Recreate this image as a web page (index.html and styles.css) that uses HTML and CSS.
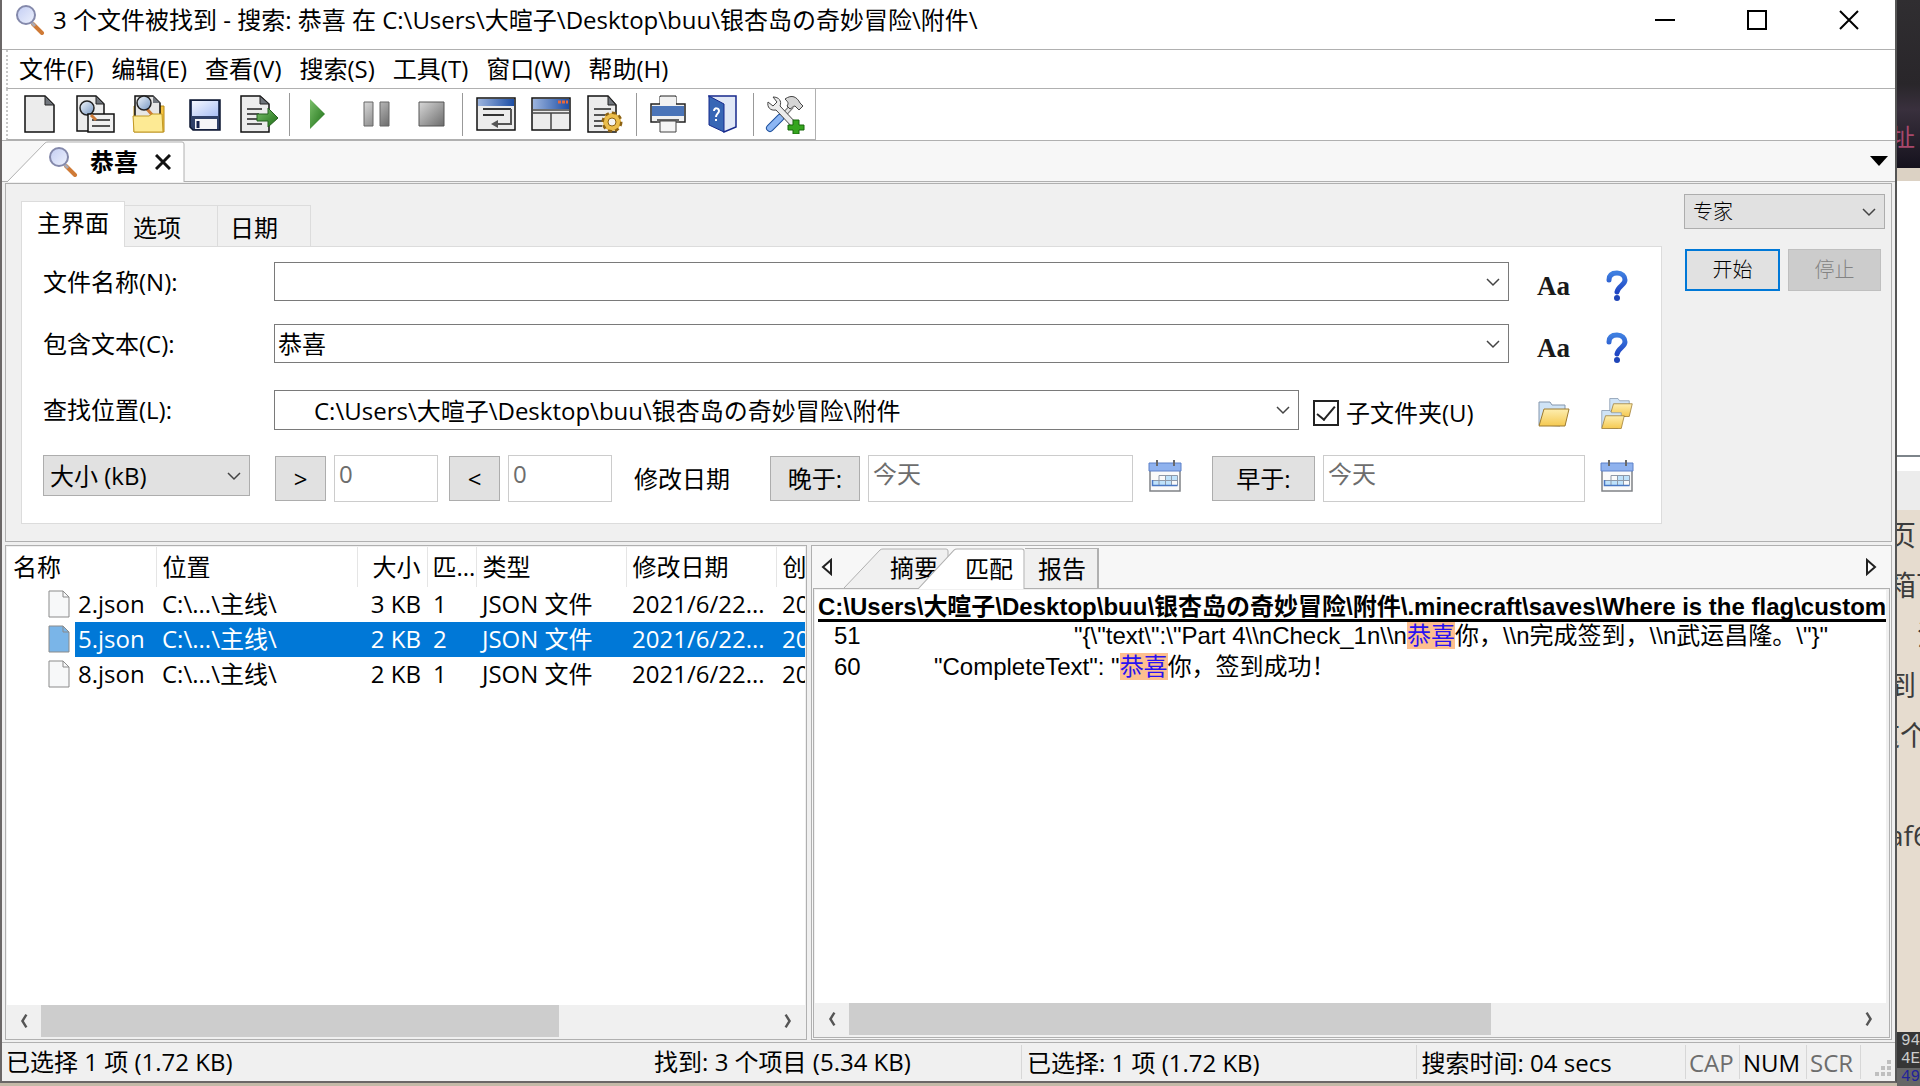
FILE: index.html
```html
<!DOCTYPE html>
<html lang="zh-CN">
<head>
    <meta charset="UTF-8">
    <meta name="viewport" content="width=device-width, initial-scale=1.0">
    <title>搜索: 恭喜</title>
    <link rel="stylesheet" href="styles.css">
</head>
<body>

    <!-- Shared gradients and symbols -->
    <svg class="defs" width="0" height="0" aria-hidden="true">
        <defs>
            <linearGradient id="lens" x1="0" y1="0" x2="1" y2="1"><stop offset="0" stop-color="#c3cdf3"/><stop offset="1" stop-color="#eef2fd"/></linearGradient>
            <linearGradient id="lensBlue" x1="0" y1="0" x2="1" y2="1"><stop offset="0" stop-color="#f4f8fd"/><stop offset="1" stop-color="#7596c2"/></linearGradient>
            <linearGradient id="blueBar" x1="0" y1="0" x2="1" y2="0"><stop offset="0" stop-color="#9cb4de"/><stop offset="1" stop-color="#1d4ea5"/></linearGradient>
            <linearGradient id="disk" x1="0" y1="0" x2="1" y2="1"><stop offset="0" stop-color="#f4f7ff"/><stop offset="1" stop-color="#a9bff5"/></linearGradient>
            <linearGradient id="green" x1="0" y1="0" x2="1" y2="1"><stop offset="0" stop-color="#7bc06b"/><stop offset="1" stop-color="#1b6e14"/></linearGradient>
            <linearGradient id="grey" x1="0" y1="0" x2="1" y2="1"><stop offset="0" stop-color="#d8d8d8"/><stop offset="1" stop-color="#6c6c6c"/></linearGradient>
            <linearGradient id="folder" x1="0" y1="0" x2="0" y2="1"><stop offset="0" stop-color="#fdeeb0"/><stop offset="1" stop-color="#f5c951"/></linearGradient>
            <linearGradient id="quest" x1="0" y1="0" x2="0" y2="1"><stop offset="0" stop-color="#3f7fe0"/><stop offset="1" stop-color="#1f45c4"/></linearGradient>
        </defs>
        <symbol id="magnifier" viewBox="0 0 30 30">
            <path d="M18 19l9 9" stroke="#cf7a36" stroke-width="4" stroke-linecap="round"/>
            <path d="M16 17l4 4" stroke="#a9a9b4" stroke-width="3"/>
            <circle cx="11" cy="10" r="9" fill="url(#lens)" stroke="#8489ab" stroke-width="2"/>
        </symbol>
        <symbol id="page" viewBox="0 0 40 40">
            <path d="M5 2h20l9 9v27H5z" fill="#ececec" stroke="#111" stroke-width="1.5"/>
            <path d="M25 2v9h9z" fill="#70757c" stroke="#222"/>
        </symbol>
        <symbol id="chevron" viewBox="0 0 16 10">
            <path d="M2 2l6 6 6-6" fill="none" stroke="#444" stroke-width="1.5"/>
        </symbol>
        <symbol id="scrollLeft" viewBox="0 0 10 18">
            <path d="M8 1L3 9l5 8" fill="none" stroke="#555" stroke-width="3"/>
        </symbol>
        <symbol id="scrollRight" viewBox="0 0 10 18">
            <path d="M2 1l5 8-5 8" fill="none" stroke="#555" stroke-width="3"/>
        </symbol>
        <symbol id="question" viewBox="0 0 22 32">
            <path d="M3 10C3 5 6 3 11 3s8 3 8 7c0 5-7 6-8 12" fill="none" stroke="url(#quest)" stroke-width="5" stroke-linecap="round"/>
            <circle cx="11" cy="28" r="3" fill="#1f45b8"/>
        </symbol>
        <symbol id="calendar" viewBox="0 0 34 34">
            <path d="M2 6h30v26H2z" fill="#fafafa" stroke="#808387" stroke-width="1.5"/>
            <path d="M1 4h32v8H1z" fill="#8fb2ee" stroke="#5c80c8"/>
            <path d="M9 1v6M26 1v6" stroke="#6a6a6a" stroke-width="2"/>
            <path d="M5 21h19v5H5zM17 17h12v5H17z" fill="#bfe2fb"/>
            <path d="M11 16.500h18.500v10M11 16.500v10M4.500 21.500h25M17.500 16.500v10M23.500 16.500v10" fill="none" stroke="#8e99a8"/>
            <path d="M4.500 21v5.500h25" fill="none" stroke="#4a78c4" stroke-width="1.5"/>
        </symbol>
        <symbol id="openFolder" viewBox="0 0 34 28">
            <path d="M2 25V2h11l2 3h13v8L23 26z" fill="#cfe3f6" stroke="#8496ac"/>
            <path d="M7 9h25l-4 17H2z" fill="url(#folder)" stroke="#9c7a30"/>
        </symbol>
        <symbol id="file" viewBox="0 0 22 28">
            <path d="M1 1h14l6 6v20H1z" fill="currentColor" stroke="#8b8b8b"/>
            <path d="M15 1v6h6" fill="none" stroke="#8b8b8b"/>
        </symbol>
    </svg>

    <div class="screen">
        <main class="window">

            <!-- Title bar -->
            <header class="title-bar">
                <svg class="app-icon"><use href="#magnifier"/></svg>
                <h1>3 个文件被找到 - 搜索: 恭喜 在 C:\Users\大暄子\Desktop\buu\银杏岛の奇妙冒险\附件\</h1>
                <div class="window-buttons">
                    <button aria-label="最小化"><svg width="20" height="20"><path d="M0 10h20" stroke="#000" stroke-width="2"/></svg></button>
                    <button aria-label="最大化"><svg width="20" height="20"><path d="M1 1h18v18H1z" fill="none" stroke="#000" stroke-width="2"/></svg></button>
                    <button aria-label="关闭"><svg width="20" height="20"><path d="M1 1l18 18M19 1L1 19" stroke="#000" stroke-width="2"/></svg></button>
                </div>
            </header>

            <!-- Menu -->
            <nav class="menu">
                <button>文件(F)</button>
                <button>编辑(E)</button>
                <button>查看(V)</button>
                <button>搜索(S)</button>
                <button>工具(T)</button>
                <button>窗口(W)</button>
                <button>帮助(H)</button>
            </nav>

            <!-- Toolbar -->
            <div class="toolbar-row">
                <div class="toolbar">
                    <button aria-label="新建"><svg viewBox="0 0 40 40"><use href="#page"/></svg></button>
                    <button aria-label="打开搜索">
                        <svg viewBox="0 0 40 40">
                            <path d="M2 2h19l8 8v27H2z" fill="#ececec" stroke="#111" stroke-width="1.5"/>
                            <path d="M21 2v8h8z" fill="#70757c" stroke="#222"/>
                            <path d="M16 19l7 8" stroke="#cf7a36" stroke-width="3"/>
                            <circle cx="12" cy="14" r="7" fill="url(#lensBlue)" stroke="#222" stroke-width="1.5"/>
                            <path d="M13 20h26v18H13z" fill="#f1f1f1" stroke="#111" stroke-width="1.5"/>
                            <path d="M17 26h18M17 32h18" stroke="#222" stroke-width="1.5"/>
                            <path d="M16 21l5 5" stroke="#cf7a36" stroke-width="3"/>
                        </svg>
                    </button>
                    <button aria-label="打开文件夹">
                        <svg viewBox="0 0 40 40">
                            <path d="M4 12h30v26H4z" fill="#f6c33f" stroke="#b58a1c"/>
                            <path d="M5 2h18l7 7v15H5z" fill="#e6e6e6" stroke="#111" stroke-width="1.5"/>
                            <path d="M23 2v7h7z" fill="#70757c"/>
                            <path d="M17 15l7 8" stroke="#cf7a36" stroke-width="3"/>
                            <circle cx="14" cy="9" r="7" fill="url(#lensBlue)" stroke="#222" stroke-width="1.5"/>
                            <path d="M3 22h16l3-2h10l1 18H4z" fill="#fdea94" stroke="#c29924"/>
                        </svg>
                    </button>
                    <button aria-label="保存">
                        <svg viewBox="0 0 40 40">
                            <path d="M5 6h30v30H8l-3-3z" fill="#2f4068" stroke="#0c1630" stroke-width="1.5"/>
                            <path d="M7 7h26v15H7z" fill="url(#disk)"/>
                            <path d="M10 25h22v10H10z" fill="#f5f5f7"/>
                            <path d="M13 27v7" stroke="#16234d" stroke-width="3"/>
                        </svg>
                    </button>
                    <button aria-label="导出">
                        <svg viewBox="0 0 40 40">
                            <path d="M1 2h19l9 8v28H1z" fill="#ececec" stroke="#111" stroke-width="1.5"/>
                            <path d="M20 2v8h9z" fill="#70757c" stroke="#222"/>
                            <path d="M7 15h15M7 20h12M7 25h10M7 30h15" stroke="#222" stroke-width="1.5"/>
                            <path d="M17 20h11v-6l10 10-10 9v-6H17z" fill="url(#green)" stroke="#255e20"/>
                        </svg>
                    </button>
                    <span class="separator first"></span>
                    <button aria-label="开始"><svg viewBox="0 0 40 40"><path d="M12 5v30l15-15z" fill="url(#green)"/></svg></button>
                    <button aria-label="暂停"><svg viewBox="0 0 40 40"><path d="M11 8h9v24h-9zM27 8h9v24h-9z" fill="url(#grey)" stroke="#666"/></svg></button>
                    <button aria-label="停止"><svg viewBox="0 0 40 40"><path d="M11 8h25v24H11z" fill="url(#grey)" stroke="#555"/></svg></button>
                    <span class="separator wide"></span>
                    <button aria-label="自动换行">
                        <svg viewBox="0 0 40 40">
                            <path d="M1 4h38v32H1z" fill="#ececec" stroke="#111" stroke-width="1.5"/>
                            <path d="M2 5h36v7H2z" fill="url(#blueBar)"/>
                            <path d="M7 15h28M7 21h21" stroke="#333" stroke-width="2"/>
                            <path d="M35 15v15H18" fill="none" stroke="#555" stroke-width="2"/><path d="M22 26l-7 4 7 4z" fill="#555"/>
                        </svg>
                    </button>
                    <button aria-label="布局">
                        <svg viewBox="0 0 40 40">
                            <path d="M1 4h38v32H1z" fill="#ececec" stroke="#111" stroke-width="1.5"/>
                            <path d="M2 5h36v10H2z" fill="url(#blueBar)"/>
                            <path d="M27 8h10" stroke="#e8683c" stroke-width="3" stroke-dasharray="3 1"/>
                            <path d="M2 16h36M2 19h36M20 19v16" stroke="#444" stroke-width="1.5"/>
                        </svg>
                    </button>
                    <button aria-label="选项">
                        <svg viewBox="0 0 40 40">
                            <path d="M2 2h20l8 9v27H2z" fill="#ececec" stroke="#111" stroke-width="1.5"/>
                            <path d="M22 2v9h8z" fill="#70757c" stroke="#222"/>
                            <path d="M8 15h17M8 21h11M8 27h8M8 32h8" stroke="#222" stroke-width="1.5"/>
                            <circle cx="26" cy="28" r="9" fill="#e2b03c" stroke="#8d6212" stroke-width="3" stroke-dasharray="4 3"/>
                            <circle cx="26" cy="28" r="8" fill="#ebbd4b"/>
                            <circle cx="26" cy="28" r="4" fill="#f4f4f4" stroke="#8d6212"/>
                        </svg>
                    </button>
                    <span class="separator"></span>
                    <button aria-label="打印">
                        <svg viewBox="0 0 40 40">
                            <path d="M12 2h16v11H12z" fill="#f1f1f1" stroke="#222"/>
                            <path d="M3 10h34v18H3z" fill="#f1f1f1" stroke="#222" stroke-width="1.5"/>
                            <path d="M12 3h16v8H12z" fill="#f1f1f1"/>
                            <path d="M4 12h32v10H4z" fill="#4a74b8"/>
                            <path d="M9 25h22v4H9z" fill="#666"/>
                            <path d="M12 27h16v11H12z" fill="#f5f5f5" stroke="#444"/>
                        </svg>
                    </button>
                    <button aria-label="帮助">
                        <svg viewBox="0 0 40 40">
                            <path d="M6 2h27v31l-12 5z" fill="#e1e8f6" stroke="#17298c" stroke-width="1.5"/>
                            <path d="M6 2l15 8v28L6 31z" fill="#3766b5" stroke="#17298c"/>
                            <path d="M11 17c0-4 5-3 5 0 0 2-3 3-3 6M13 25v2" fill="none" stroke="#fff" stroke-width="2"/>
                        </svg>
                    </button>
                    <span class="separator"></span>
                    <button aria-label="自定义">
                        <svg viewBox="0 0 40 40">
                            <path d="M27 12L16 24" stroke="#777" stroke-width="5"/><path d="M27 12L16 24" stroke="#e4e4e4" stroke-width="3"/>
                            <path d="M15 24L5 34" stroke="#1d4f9c" stroke-width="8" stroke-linecap="round"/>
                            <path d="M15 24L5 34" stroke="#8cb6f4" stroke-width="6" stroke-linecap="round"/>
                            <path d="M20 5c7-5 12-2 15 4l3 3-4 4-4-4c-2 0-3 2-5 3l-3-3c2-3 1-4-2-7z" fill="#d5d5d5" stroke="#444"/>
                            <path d="M8 3c6 0 9 4 7 9l18 19-4 4-18-19C5 17 2 13 3 8l5 4 4-4z" fill="#ececec" stroke="#444"/>
                            <path d="M28 26h6v5h5v5h-5v4h-6v-4h-5v-5h5z" fill="#35a51e" stroke="#17660b"/>
                        </svg>
                    </button>
                </div>
            </div>

            <!-- Search tabs -->
            <div class="search-tabs">
                <button class="search-tab">
                    <svg class="tab-shape" viewBox="0 0 178 41" preserveAspectRatio="none"><path d="M0 41L38 2q1-1 3-1h134q2 0 2 2v38" fill="#fff" stroke="#b0b0b0"/></svg>
                    <svg class="app-icon"><use href="#magnifier"/></svg>
                    <span>恭喜</span>
                    <svg class="close" width="16" height="16"><path d="M1 1l14 14M15 1L1 15" stroke="#111" stroke-width="3"/></svg>
                </button>
                <button class="tab-list" aria-label="标签列表"><svg width="18" height="10"><path d="M0 0h18L9 10z"/></svg></button>
            </div>

            <!-- Search criteria -->
            <section class="criteria">
                <div class="criteria-main">
                    <div class="page-tabs">
                        <button class="active">主界面</button>
                        <button>选项</button>
                        <button>日期</button>
                    </div>
                    <form class="fields">
                        <div class="row">
                            <label class="name" for="fileName">文件名称(N):</label>
                            <div class="combo"><input type="text" id="fileName"><svg><use href="#chevron"/></svg></div>
                            <button type="button" class="icon-button match-case">Aa</button>
                            <button type="button" class="icon-button" aria-label="帮助"><svg width="22" height="32"><use href="#question"/></svg></button>
                        </div>
                        <div class="row">
                            <label class="name" for="contains">包含文本(C):</label>
                            <div class="combo"><input type="text" id="contains" value="恭喜"><svg><use href="#chevron"/></svg></div>
                            <button type="button" class="icon-button match-case">Aa</button>
                            <button type="button" class="icon-button" aria-label="帮助"><svg width="22" height="32"><use href="#question"/></svg></button>
                        </div>
                        <div class="row look-in">
                            <label class="name" for="lookIn">查找位置(L):</label>
                            <div class="combo"><input type="text" id="lookIn" value="C:\Users\大暄子\Desktop\buu\银杏岛の奇妙冒险\附件"><svg><use href="#chevron"/></svg></div>
                            <label class="subfolders"><input type="checkbox" checked>子文件夹(U)</label>
                            <button type="button" class="icon-button" aria-label="浏览"><svg width="34" height="28"><use href="#openFolder"/></svg></button>
                            <button type="button" class="icon-button" aria-label="浏览多个">
                                <svg width="34" height="34" viewBox="0 0 34 34"><use href="#openFolder" x="8" y="0" width="26" height="21"/><use href="#openFolder" x="0" y="12" width="26" height="21"/></svg>
                            </button>
                        </div>
                        <div class="row filters">
                            <div class="select size-unit">
                                <select aria-label="大小"><option>大小 (kB)</option></select>
                                <svg><use href="#chevron"/></svg>
                            </div>
                            <div class="pair">
                                <button type="button">&gt;</button>
                                <input type="text" class="number" placeholder="0" aria-label="大于">
                            </div>
                            <div class="pair">
                                <button type="button">&lt;</button>
                                <input type="text" class="number" placeholder="0" aria-label="小于">
                            </div>
                            <span class="modified">修改日期</span>
                            <div class="pair date">
                                <button type="button">晚于:</button>
                                <input type="text" placeholder="今天" aria-label="晚于">
                                <button type="button" class="icon-button" aria-label="日历"><svg width="34" height="34"><use href="#calendar"/></svg></button>
                            </div>
                            <div class="pair date">
                                <button type="button" class="before">早于:</button>
                                <input type="text" placeholder="今天" aria-label="早于">
                                <button type="button" class="icon-button" aria-label="日历"><svg width="34" height="34"><use href="#calendar"/></svg></button>
                            </div>
                        </div>
                    </form>
                </div>
                <div class="actions">
                    <div class="select">
                        <select aria-label="模式"><option>专家</option></select>
                        <svg><use href="#chevron"/></svg>
                    </div>
                    <div class="action-buttons">
                        <button class="start">开始</button>
                        <button disabled>停止</button>
                    </div>
                </div>
            </section>

            <!-- Results -->
            <section class="results">
                <div class="file-pane">
                    <div class="file-list">
                        <table>
                            <colgroup>
                                <col class="c-icon"><col class="c-name"><col class="c-path"><col class="c-size">
                                <col class="c-hits"><col class="c-type"><col class="c-date"><col>
                            </colgroup>
                            <thead>
                                <tr><th colspan="2">名称</th><th>位置</th><th class="num">大小</th><th class="hit-count">匹...</th><th>类型</th><th>修改日期</th><th>创</th></tr>
                            </thead>
                            <tbody>
                                <tr><td><svg class="file-icon"><use href="#file"/></svg></td><td>2.json</td><td>C:\...\主线\</td><td class="num">3 KB</td><td>1</td><td>JSON 文件</td><td>2021/6/22...</td><td>20</td></tr>
                                <tr class="selected"><td><svg class="file-icon"><use href="#file"/></svg></td><td>5.json</td><td>C:\...\主线\</td><td class="num">2 KB</td><td>2</td><td>JSON 文件</td><td>2021/6/22...</td><td>20</td></tr>
                                <tr><td><svg class="file-icon"><use href="#file"/></svg></td><td>8.json</td><td>C:\...\主线\</td><td class="num">2 KB</td><td>1</td><td>JSON 文件</td><td>2021/6/22...</td><td>20</td></tr>
                            </tbody>
                        </table>
                    </div>
                    <div class="scrollbar">
                        <svg class="arrow"><use href="#scrollLeft"/></svg>
                        <div class="track"><div class="thumb" style="width: 71%"></div></div>
                        <svg class="arrow"><use href="#scrollRight"/></svg>
                    </div>
                </div>

                <div class="view-pane">
                    <div class="view-tabs">
                        <svg class="scroll-tab" width="12" height="18"><path d="M10 2v14L2 9z" fill="#fff" stroke="#222" stroke-width="2"/></svg>
                        <button class="view-tab slanted">
                            <svg class="tab-shape" viewBox="0 0 105 40" preserveAspectRatio="none"><path d="M0 40L36 2q1-1 3-1h63q2 0 2 2v37" fill="#f0f0f0" stroke="#b0b0b0"/></svg>
                            <span>摘要</span>
                        </button>
                        <button class="view-tab slanted active">
                            <svg class="tab-shape" viewBox="0 0 107 40" preserveAspectRatio="none"><path d="M0 40L36 2q1-1 3-1h65q2 0 2 2v37" fill="#fff" stroke="#b0b0b0"/></svg>
                            <span>匹配</span>
                        </button>
                        <button class="view-tab plain"><span>报告</span></button>
                        <svg class="scroll-tab end" width="12" height="18"><path d="M2 2v14l8-7z" fill="#fff" stroke="#222" stroke-width="2"/></svg>
                    </div>
                    <div class="view-body">
                        <div class="hits">
                            <h2>C:\Users\大暄子\Desktop\buu\银杏岛の奇妙冒险\附件\.minecraft\saves\Where is the flag\custom</h2>
                            <p><span class="line-no">51</span><span class="code deep">"{\"text\":\"Part 4\\nCheck_1n\\n<mark>恭喜</mark>你，\\n完成签到，\\n武运昌隆。\"}"</span></p>
                            <p><span class="line-no">60</span><span class="code">"CompleteText": "<mark>恭喜</mark>你，签到成功！</span></p>
                        </div>
                        <div class="scrollbar">
                            <svg class="arrow"><use href="#scrollLeft"/></svg>
                            <div class="track"><div class="thumb" style="width: 64%"></div></div>
                            <svg class="arrow"><use href="#scrollRight"/></svg>
                        </div>
                    </div>
                </div>
            </section>

            <!-- Status bar -->
            <footer class="status">
                <span class="selected-count">已选择 1 项 (1.72 KB)</span>
                <span class="found">找到: 3 个项目 (5.34 KB)</span>
                <span class="selected-size cell">已选择: 1 项 (1.72 KB)</span>
                <span class="elapsed cell">搜索时间: 04 secs</span>
                <span class="key cell off">CAP</span>
                <span class="key num cell">NUM</span>
                <span class="key cell off">SCR</span>
                <span class="grip cell"><svg width="16" height="16"><path d="M12 0h4v4h-4zM6 6h4v4H6zM12 6h4v4h-4zM0 12h4v4H0zM6 12h4v4H6zM12 12h4v4h-4z" fill="#bfbfbf"/></svg></span>
            </footer>
        </main>

        <!-- Windows behind, showing at the right edge -->
        <aside class="behind">
            <div class="behind-photo"><span>址</span></div>
            <div class="behind-band"></div>
            <div class="behind-page"></div>
            <div class="behind-bar"></div>
            <div class="behind-note">
                <p>页</p>
                <p>箱下</p>
                <p class="indent">注</p>
                <p>到</p>
                <p class="half">这个</p>
                <p></p>
                <p>af6</p>
            </div>
            <div class="behind-hex">
                <p>94</p>
                <p>4E</p>
                <p class="current">49</p>
            </div>
        </aside>
    </div>

</body>
</html>
```
FILE: styles.css
```css
* {
    box-sizing: border-box;
}

body {
    margin: 0;
    font-family: "Open Sans", "Noto Sans CJK SC", sans-serif;
    font-size: 24px;
    line-height: 32px;
    color: #000;
    background: #c4baa8;
    overflow: hidden;
}

button, input, select {
    font: inherit;
    color: inherit;
    margin: 0;
    border-radius: 0;
}

button {
    border: none;
    background: none;
    padding: 0;
    white-space: nowrap;
}

svg {
    display: block;
    flex: none;
}

h1, h2, p {
    margin: 0;
    font-size: inherit;
    font-weight: normal;
}

.defs {
    position: absolute;
}

.screen {
    display: flex;
    height: 100vh;
}

.window {
    flex: 1;
    min-width: 0;
    display: flex;
    flex-direction: column;
    margin-bottom: 3px;
    border: 2px solid #6b6767;
    border-top: none;
    border-right-color: #555;
    background: #f0f0f0;
}

/* Title bar */
.title-bar {
    display: flex;
    align-items: center;
    height: 50px;
    padding: 0 0 9px 13px;
    gap: 8px;
    background: white;
    border-bottom: 1px solid #b0b0b0;
}

.app-icon {
    width: 30px;
    height: 30px;
}

.title-bar h1 {
    flex: 1;
    white-space: nowrap;
}

.window-buttons {
    display: flex;
}

.window-buttons button {
    width: 92px;
    height: 40px;
    display: grid;
    place-items: center;
}

/* Menu */
.menu {
    display: flex;
    align-items: center;
    gap: 18px;
    height: 39px;
    margin-left: 4px;
    padding-left: 11px;
    background: white;
    border-left: 2px dotted #c8c8c8;
    border-bottom: 1px solid #b0b0b0;
    box-shadow: -4px 0 white;
}

/* Toolbar */
.toolbar-row {
    height: 52px;
    background: white;
    border-bottom: 1px solid #b0b0b0;
}

.toolbar {
    display: flex;
    align-items: center;
    width: max-content;
    height: 51px;
    margin-left: 4px;
    padding: 0 3px 0 4px;
    border-left: 2px dotted #c8c8c8;
    border-right: 1px solid #b0b0b0;
    border-bottom: 1px solid #b0b0b0;
}

.toolbar button {
    width: 55px;
    height: 40px;
    display: grid;
    place-items: center;
}

.toolbar button svg {
    width: 40px;
    height: 40px;
}

.separator {
    width: 1px;
    height: 43px;
    margin: 0 3px;
    background: #999;
}

.separator.first {
    margin: 0 0 0 2px;
}

.separator.wide {
    margin: 0 5px 0 7px;
}

/* Search tabs */
.search-tabs {
    display: flex;
    justify-content: space-between;
    height: 41px;
    padding: 0 7px 0 5px;
    background: #f7f7f7;
    border-bottom: 1px solid #b0b0b0;
}

.search-tab {
    position: relative;
    display: flex;
    align-items: center;
    width: 178px;
    height: 41px;
    padding-left: 41px;
    font-weight: bold;
}

.tab-shape {
    position: absolute;
    left: 0;
    top: 0;
    width: 100%;
    height: 100%;
}

.search-tab .app-icon {
    position: relative;
}

.search-tab span {
    position: relative;
    margin: 0 17px 0 12px;
}

.search-tab .close {
    position: relative;
}

/* Search criteria */
.criteria {
    display: flex;
    align-items: flex-start;
    gap: 22px;
    margin: 1px 3px 0;
    padding: 10px 6px 17px 15px;
    border: 1px solid #b0b0b0;
}

.criteria-main {
    flex: 1;
    padding-top: 7px;
}

.page-tabs {
    display: flex;
    align-items: flex-end;
    height: 45px;
}

.page-tabs button {
    width: 93px;
    height: 41px;
    padding: 3px 0 0 8px;
    text-align: left;
    border: 1px solid #dcdcdc;
    border-left: none;
    border-bottom: none;
}

.page-tabs button:last-child {
    padding-left: 12px;
}

.page-tabs button.active {
    position: relative;
    width: 104px;
    height: 46px;
    margin-bottom: -1px;
    padding: 0 0 4px 15px;
    background: white;
    border-left: 1px solid #dcdcdc;
}

.fields {
    display: flex;
    flex-direction: column;
    padding: 15px 28px 21px 21px;
    background: white;
    border: 1px solid #dcdcdc;
}

.row {
    display: flex;
    align-items: center;
    height: 39px;
    margin-bottom: 23px;
}

.row .name {
    width: 231px;
}

.combo {
    position: relative;
    flex: 1;
    margin-right: 28px;
}

.combo input {
    display: block;
    width: 100%;
    height: 39px;
    padding: 0 40px 2px 3px;
    border: 1px solid #7a7a7a;
    background: white;
}

.combo svg, .select svg {
    position: absolute;
    right: 8px;
    top: 50%;
    margin-top: -5px;
    width: 16px;
    height: 10px;
    pointer-events: none;
}

.icon-button {
    display: grid;
    place-items: center;
    width: 33px;
    height: 34px;
    margin-top: 8px;
}

.icon-button + .icon-button {
    margin-left: 30px;
}

.match-case {
    font-family: "Liberation Serif", serif;
    font-size: 27px;
    font-weight: bold;
    color: #1a1a1a;
}

.look-in {
    height: 40px;
    margin: 4px 0 25px;
}

.look-in .combo {
    margin-right: 14px;
}

.look-in .combo input {
    height: 40px;
    padding-left: 39px;
}

.subfolders {
    display: flex;
    align-items: center;
    gap: 7px;
    width: 224px;
    padding-top: 6px;
}

.subfolders input {
    appearance: none;
    width: 26px;
    height: 26px;
    border: 2px solid #222;
    background: white;
    display: grid;
    place-items: center;
}

.subfolders input:checked::before {
    content: "";
    width: 8px;
    height: 16px;
    margin-bottom: 4px;
    border: solid #222;
    border-width: 0 2px 2px 0;
    transform: rotate(40deg);
}

.filters {
    align-items: flex-start;
    height: 47px;
    margin-bottom: 0;
}

.select {
    position: relative;
}

.select select {
    appearance: none;
    display: block;
    width: 100%;
    height: 35px;
    padding: 0 30px 0 8px;
    background: #e1e1e1;
    border: 1px solid #adadad;
}

.size-unit {
    width: 207px;
    margin-right: 25px;
}

.size-unit select {
    height: 41px;
    padding-left: 6px;
}

.pair {
    display: flex;
    align-items: center;
    gap: 8px;
    margin-right: 11px;
}

.pair > button:first-child {
    width: 51px;
    height: 45px;
    background: #e1e1e1;
    border: 1px solid #adadad;
}

.pair input {
    width: 104px;
    height: 47px;
    padding: 0 4px 10px;
    border: 1px solid #ccc;
    min-width: 0;
}

.pair input::placeholder {
    color: #6d6d6d;
    opacity: 1;
}

.modified {
    flex: none;
    padding-top: 8px;
    margin: 0 40px 0 11px;
    white-space: nowrap;
}

.date {
    flex: 1 1 411px;
    margin-right: 31px;
}

.date:last-child {
    margin-right: 0;
    flex-basis: 421px;
}

.date > button:first-child {
    width: 90px;
}

.date > button.before {
    width: 103px;
}

.date input {
    flex: 1;
}

.date .icon-button {
    margin: 0 0 5px 7px;
}

.actions {
    width: 201px;
    font-size: 20px;
    font-weight: 300;
}

.action-buttons {
    display: flex;
    gap: 8px;
    margin: 20px 4px 0 1px;
}

.action-buttons button {
    flex: 1;
    height: 42px;
    background: #e1e1e1;
    border: 2px solid #0078d7;
}

.action-buttons button:disabled {
    background: #ccc;
    border: 1px solid #bfbfbf;
    color: #838383;
}

/* Results */
.results {
    flex: 1;
    min-height: 0;
    display: flex;
    gap: 4px;
    margin: 3px 3px 2px;
}

.file-pane {
    width: 802px;
    display: flex;
    flex-direction: column;
    border: 1px solid #b0b0b0;
    padding: 1px 1px 2px;
}

.file-list {
    flex: 1;
    overflow: hidden;
    background: white;
}

.file-list table {
    table-layout: fixed;
    width: 100%;
    border-collapse: collapse;
}

.file-list th, .file-list td {
    padding: 0 0 0 6px;
    font-weight: normal;
    text-align: left;
    white-space: nowrap;
    overflow: hidden;
}

.file-list th {
    height: 40px;
    border-right: 1px solid #e5e5e5;
}

.file-list th:last-child {
    border-right: none;
}

.file-list td {
    height: 35px;
    padding-bottom: 2px;
}

.file-list td:nth-child(2) {
    padding-left: 3px;
}

.file-list .num {
    padding-left: 0;
    padding-right: 6px;
    text-align: right;
}

.file-list .hit-count {
    padding-left: 5px;
}

.c-icon { width: 68px; }
.c-name { width: 81px; }
.c-path { width: 201px; }
.c-size { width: 70px; }
.c-hits { width: 49px; }
.c-type { width: 150px; }
.c-date { width: 150px; }

.selected td:not(:first-child) {
    background: #0078d7;
    color: white;
}

.file-icon {
    width: 22px;
    height: 28px;
    margin-left: 35px;
    color: #f7f8f9;
}

.selected .file-icon {
    color: #7ab5e8;
}

.scrollbar {
    display: flex;
    align-items: center;
    height: 32px;
    background: #f0f0f0;
}

.track {
    flex: 1;
    height: 32px;
}

.thumb {
    height: 32px;
    background: #cdcdcd;
}

.arrow {
    width: 8px;
    height: 16px;
    margin: 0 13px;
}

.view-pane {
    flex: 1;
    min-width: 0;
    display: flex;
    flex-direction: column;
    border: 1px solid #b0b0b0;
    background: #f7f7f7;
}

.view-tabs {
    display: flex;
    align-items: flex-end;
    height: 42px;
    padding: 0 14px 0 9px;
}

.scroll-tab {
    align-self: center;
}

.scroll-tab.end {
    margin-left: auto;
}

.view-tab {
    position: relative;
    height: 40px;
}

.view-tab span {
    position: relative;
}

.slanted {
    width: 105px;
    margin-left: 11px;
    padding-left: 46px;
    text-align: left;
}

.slanted.active {
    z-index: 1;
    width: 107px;
    height: 41px;
    margin: 0 0 -1px -31px;
    padding-left: 47px;
}

.plain {
    width: 74px;
    padding-left: 2px;
    background: #f0f0f0;
    border: 1px solid #b0b0b0;
    border-width: 1px 2px 0 0;
}

.view-body {
    flex: 1;
    min-height: 0;
    display: flex;
    flex-direction: column;
    margin: 0 1px 1px;
    padding: 1px 3px 2px 1px;
    border: 1px solid #b0b0b0;
    background: #f0f0f0;
}

.hits {
    flex: 1;
    overflow: hidden;
    padding: 2px 0 0 3px;
    background: white;
    font-family: "Liberation Sans", "Noto Sans CJK SC", sans-serif;
    font-weight: 300;
    line-height: 28px;
    white-space: nowrap;
}

.hits h2 {
    height: 30px;
    overflow: hidden;
    line-height: 30px;
    font-weight: bold;
    border-bottom: 3px solid black;
}

.hits p {
    display: flex;
    height: 31px;
    padding-left: 16px;
}

.line-no {
    width: 100px;
}

.deep {
    padding-left: 140px;
}

.hits mark {
    background: #fdbf8f;
    color: #2a12f0;
}

/* Status bar */
.status {
    display: flex;
    align-items: center;
    height: 39px;
    padding-left: 4px;
    border-top: 1px solid #b0b0b0;
    line-height: 36px;
    white-space: nowrap;
}

.cell {
    height: 34px;
    padding-left: 5px;
    border-left: 1px solid #d7d7d7;
}

.selected-count {
    flex: 652;
}

.found {
    flex: 369;
}

.selected-size {
    flex: 391;
}

.elapsed {
    flex: 265;
}

.key {
    width: 54px;
    padding-left: 3px;
}

.key.num {
    width: 67px;
}

.off {
    color: #6d6d6d;
}

.grip {
    display: flex;
    align-items: flex-end;
    width: 35px;
    padding: 0 0 3px 14px;
}

/* Background windows */
.behind {
    position: relative;
    z-index: 0;
    display: flex;
    flex-direction: column;
    width: 23px;
    overflow: hidden;
    font-size: 28px;
    line-height: 50px;
    color: #3c3c3c;
    white-space: nowrap;
    box-shadow: inset 9px 0 9px -5px rgba(0, 0, 0, 0.4);
}

.behind > div {
    position: relative;
    z-index: -1;
    flex: none;
}

.behind-photo {
    height: 168px;
    padding-top: 112px;
    background: linear-gradient(#302e31, #29262a 50%, #39303d 65%, #15121d);
    color: #a8486c;
    font-size: 24px;
}

.behind-photo span {
    margin-left: -6px;
}

.behind-band {
    height: 13px;
    background: #dcd2c4;
}

.behind-page {
    height: 276px;
    background: white;
    border-bottom: 2px solid #7d848a;
}

.behind-bar {
    height: 53px;
    border-top: 14px solid white;
    background: #ececec;
}

.behind .behind-note {
    flex: 1;
    background: #e6dccf;
}

.behind-note p {
    height: 50px;
    margin-left: -9px;
}

.behind-note .indent {
    margin-left: 20px;
}

.behind-note .half {
    margin-left: -25px;
}

.behind-hex {
    height: 54px;
    background: #363636;
    color: #ccc;
    font-family: "Liberation Mono", monospace;
    font-size: 16px;
    line-height: 18px;
}

.behind-hex p {
    height: 18px;
    padding-left: 4px;
}

.behind-hex .current {
    background: #666;
    color: #22229a;
}
```
